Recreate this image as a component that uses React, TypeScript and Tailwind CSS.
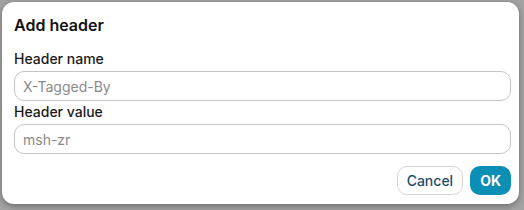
import React from "react";

export default function App() {
  return (
    <div className="w-[524px] h-[210px] bg-[#a3a3a3] pt-[2px] pl-[2px] pr-[5px] pb-[6px] font-['Inter',sans-serif]">
      <div className="h-full rounded-[12px] bg-white pl-3 pr-[8px] pt-[13px] pb-[9px] shadow-[0_2px_6px_rgba(0,0,0,0.35)] flex flex-col">
        {/* TITLE */}
        <h2 className="text-[16px] font-semibold text-[#111] leading-5 mb-[15px]">Add header</h2>

        {/* NAME */}
        <label className="text-[14px] font-medium text-[#1a1a1a] leading-[18px] mb-[3px]">Header name</label>
        <input
          className="h-[30px] w-full rounded-[10px] border border-[#c4c4c4] px-2 text-[14px] text-[#222] placeholder:text-[#8a8a8a] outline-none"
          placeholder="X-Tagged-By"
        />

        {/* VALUE */}
        <label className="text-[14px] font-medium text-[#1a1a1a] leading-[18px] mt-[2px] mb-[3px]">Header value</label>
        <input
          className="h-[30px] w-full rounded-[10px] border border-[#c4c4c4] px-2 text-[14px] text-[#222] placeholder:text-[#8a8a8a] outline-none"
          placeholder="msh-zr"
        />

        {/* ACTIONS */}
        <div className="flex justify-end gap-[7px] mt-auto">
          <button className="h-[29px] px-[9px] rounded-[10px] border border-[#d4d4d4] bg-white text-[14px] font-medium text-[#1d4e68]">
            Cancel
          </button>
          <button className="h-[29px] px-[10px] rounded-[10px] bg-[#0b8fb5] text-[14px] font-bold text-white">
            OK
          </button>
        </div>
      </div>
    </div>
  );
}
